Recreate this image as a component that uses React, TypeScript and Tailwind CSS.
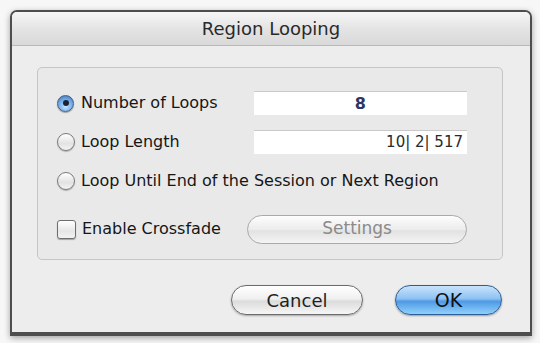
import React from 'react';

const font = { fontFamily: '"DejaVu Sans", "Liberation Sans", sans-serif' };

const Radio = ({ checked }: { checked?: boolean }) =>
  checked ? (
    <span className="relative flex h-[17px] w-[17px] shrink-0 items-center justify-center rounded-full border border-[#3f5f8a] bg-[radial-gradient(circle_at_50%_70%,#c6e4ff_0%,#6fa9e6_55%,#3c6fb0_100%)] shadow-[0_1px_1px_rgba(0,0,0,0.35)]">
      <span className="h-[6px] w-[6px] rounded-full bg-[#1b2333]" />
    </span>
  ) : (
    <span className="h-[18px] w-[18px] shrink-0 rounded-full border border-[#7a7a7a] bg-[linear-gradient(#ffffff,#e2e2e2_60%,#f4f4f4)] shadow-[0_1px_1px_rgba(0,0,0,0.25)]" />
  );

const App = () => {
  return (
    <div className="h-[343px] w-[540px] bg-[#f7f7f7] pl-[10px] pr-[8px] pt-[10px] pb-[7px]" style={font}>
      <div className="flex h-full flex-col rounded-t-[7px] border-2 border-b-[4px] border-[#4e4e4e] bg-[#ededed] shadow-[0_2px_6px_rgba(0,0,0,0.35)]">
        {/* title bar */}
        <div className="flex h-[34px] shrink-0 items-center justify-center rounded-t-[5px] border-b border-[#b9b9b9] bg-[linear-gradient(#f6f6f6,#e4e4e4_50%,#d9d9d9)] text-[18px] text-[#2a2a2a]">
          Region Looping
        </div>

        {/* group box */}
        <div className="ml-[25px] mr-[27px] mt-[21px] flex flex-col rounded-[5px] border border-[#c6c6c6] bg-[#e9e9e9] pb-[15px] pl-[19px] pr-[35px] pt-[23px] text-[16px] text-[#161616]">
          <div className="flex h-[24px] items-center">
            <div className="flex w-[197px] items-center gap-[7px]">
              <Radio checked />
              <span>Number of Loops</span>
            </div>
            <div className="flex h-[24px] w-[214px] items-center justify-center border-t border-[#c9c9c9] bg-white text-[16px] font-bold text-[#2e3561]">
              8
            </div>
          </div>

          <div className="mt-[15px] flex h-[24px] items-center">
            <div className="flex w-[197px] items-center gap-[6px]">
              <Radio />
              <span>Loop Length</span>
            </div>
            <div className="flex h-[24px] w-[214px] items-center justify-end border-t border-[#c9c9c9] bg-white pr-[4px] text-[15px] text-[#2a2a2a]">
              10| 2| 517
            </div>
          </div>

          <div className="mt-[15px] flex h-[24px] items-center gap-[6px] whitespace-nowrap">
            <Radio />
            <span>Loop Until End of the Session or Next Region</span>
          </div>

          <div className="mt-[21px] flex h-[30px] items-center">
            <div className="flex w-[193px] items-center gap-[6px]">
              <span className="h-[19px] w-[19px] shrink-0 rounded-[3px] border border-[#6e6e6e] bg-[linear-gradient(#ffffff,#e6e6e6_60%,#f3f3f3)] shadow-[0_1px_1px_rgba(0,0,0,0.3)]" />
              <span>Enable Crossfade</span>
            </div>
            <div className="flex h-[29px] w-[223px] items-center justify-center rounded-full border border-[#a9a9a9] bg-[linear-gradient(#fdfdfd,#ececec_50%,#e2e2e2_55%,#f4f4f4)] text-[17px] text-[#8a8a8a]">
              Settings
            </div>
          </div>
        </div>

        {/* buttons */}
        <div className="ml-[219px] mt-[25px] flex items-center gap-[32px]">
          <div className="flex h-[30px] w-[132px] items-center justify-center rounded-full border border-[#6b6b6b] bg-[linear-gradient(#ffffff,#f0f0f0_45%,#dcdcdc_55%,#f6f6f6)] text-[18px] text-[#1f1f1f] shadow-[0_1px_2px_rgba(0,0,0,0.3)]">
            Cancel
          </div>
          <div className="flex h-[30px] w-[107px] items-center justify-center rounded-full border border-[#2f5e96] bg-[linear-gradient(#c9e3fb,#8ec2f2_45%,#4f9ae6_55%,#8fd0fb)] text-[19px] text-[#111] shadow-[0_1px_2px_rgba(0,0,0,0.35)]">
            OK
          </div>
        </div>
      </div>
    </div>
  );
};

export default App;
